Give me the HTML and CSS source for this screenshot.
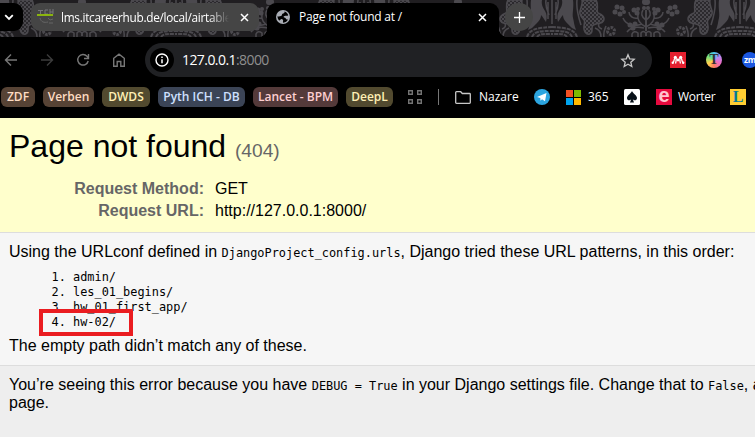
FILE: index.html
```
<!DOCTYPE html>
<html lang="en">
<head>
<meta charset="utf-8">
<title>Page not found at /</title>
<link rel="stylesheet" href="styles.css">
</head>
<body>
<div class="browser">
  <div class="tabstrip">
    <svg class="damask" width="755" height="37" aria-hidden="true">
      <defs>
        <pattern id="mesh" width="4" height="4" patternUnits="userSpaceOnUse">
          <rect width="4" height="4" fill="#4b494e"/>
          <circle cx="1" cy="1" r="1" fill="#201e21"/><circle cx="3" cy="3" r="1" fill="#201e21"/>
        </pattern>
        <g id="half" fill="none" stroke="#4b494e" stroke-width="1.5">
          <path d="M0 31V10M0 27C6 24 9 19 8 14M0 20C5 17 5 13 3 10M8 18c5 1 9-2 9-6M4 24c8 3 16 1 19-6M2 28c9-2 14 0 17 4"/>
          <g fill="#4b494e" stroke="none">
            <circle cx="1" cy="2" r="3"/><circle cx="2" cy="8" r="2"/>
            <circle cx="9" cy="13" r="2.500"/><circle cx="12" cy="10" r="2.500"/><circle cx="8" cy="9" r="2"/>
            <circle cx="24" cy="8" r="2.500"/><circle cx="29" cy="7" r="2.500"/><circle cx="31" cy="12" r="2.500"/><circle cx="26" cy="14" r="2.500"/><circle cx="22" cy="12" r="2"/>
            <circle cx="11" cy="24" r="2.500"/><circle cx="16" cy="25" r="2.500"/><circle cx="13" cy="28" r="2.500"/>
          </g>
          <path d="M0 36v-3q3-3 5 0v4M8 37v-4q4-3 6 1v3"/>
          <circle cx="35" cy="31" r="3.500" stroke-width="3" stroke-dasharray="2.500 1"/>
          <path d="M42 37c1-5-1-8-2-11M45 37c0-6 3-8 6-9M44 29c3-1 4-3 3-5"/>
          <path d="M50 0h14c-1 4 1 7 2 11s-2 7-4 9 2 8-1 12-7 2-7-2 0-5-4-6-8-1-8-5 4-5 6-6-1-9 2-13Z" fill="url(#mesh)"/>
          <path d="M73 0h11c-1 4 1 8 3 11s2 7 1 11c-2-3-3-5-5-7 0 5-4 8-9 13l-4 2c2-5 2-8 3-12s-1-11 0-18Z" fill="#4b494e" stroke="none"/>
          <path d="M69 0c1 9-1 16-4 25M88 0c-1 6 1 10 3 15M94 0v24M90 2v17"/>
          <path d="M69 37c3-9 12-9 25-10M74 37c2-6 9-6 20-6M79 37c3-4 8-3 15-3" stroke-width="2" stroke-dasharray="4 1"/>
        </g>
        <pattern id="lace" x="552" y="0" width="188" height="37" patternUnits="userSpaceOnUse">
          <rect width="188" height="37" fill="#201e21"/>
          <use href="#half" x="94"/>
          <use href="#half" transform="translate(94 0) scale(-1 1)"/>
        </pattern>
      </defs>
      <rect width="755" height="37" fill="url(#lace)"/>
    </svg>
    <div class="tab-search"><svg width="10" height="7" viewBox="0 0 10 7"><path d="M1.2 1.2 5 5l3.8-3.8" fill="none" stroke="#fff" stroke-width="1.8"/></svg></div>
    <div class="tab tab-idle">
      <svg class="favicon" width="17" height="17" viewBox="0 0 17 17"><g fill="none" stroke="#77777a"><path d="M1 1.500h5M3.500 1.500V5M11 1H8v4h3M13 0v5M16 0v5M13 3h3"/><path d="M3 9c1 4 4 5 8 4M11 9l2 2 3-1M12 14h4" stroke="#666"/></g><path d="M0 6h16" stroke="#9bd000" stroke-width="1.600"/></svg>
      <span class="tab-title t1">lms.itcareerhub.de/local/airtable</span>
      <svg class="close" width="9" height="9" viewBox="0 0 9 9"><path d="m1 1 7 7M8 1 1 8" stroke="#fff" stroke-width="1.500"/></svg>
    </div>
    <div class="tab tab-active">
      <svg class="favicon" width="14" height="14" viewBox="0 0 14 14"><circle cx="7" cy="7" r="7" fill="#a9adb5"/><path d="M8.500 1.500C9 3 7.500 3.200 6.500 3.800S6.500 5.500 5 6 3 6.600 1.500 6.300C1.400 8 2.300 9.600 3.200 10.600 4.500 10.500 4.200 9 5.500 9s1.800 1 1.600 2-.3 1.500.4 1.700c2-.2 3.600-1.500 4.500-3.200-1.200.3-1.800-.2-2.200-1S8.500 8 7.800 7.300s.7-1.800 1.900-1.600 2 .3 2.500-.8C11.500 3 10.200 2 8.500 1.500Z" fill="#000"/></svg>
      <span class="tab-title t2">Page not found at /</span>
      <svg class="close" width="9" height="9" viewBox="0 0 9 9"><path d="m1 1 7 7M8 1 1 8" stroke="#fff" stroke-width="1.500"/></svg>
    </div>
    <div class="new-tab"><svg width="11" height="11" viewBox="0 0 11 11"><path d="M5.500 0v11M0 5.500h11" stroke="#fff" stroke-width="1.300"/></svg></div>
  </div>

  <div class="toolbar">
    <svg class="nav" width="14" height="14" viewBox="0 0 14 14"><path d="M13 7H2M7 1.500 1.500 7 7 12.500" fill="none" stroke="#777" stroke-width="1.400"/></svg>
    <svg class="nav" width="14" height="14" viewBox="0 0 14 14"><path d="M1 7h11M7 1.500 12.500 7 7 12.500" fill="none" stroke="#3c3c3c" stroke-width="1.400"/></svg>
    <svg class="nav" width="14" height="14" viewBox="0 0 14 14"><path d="M12.200 8A5.300 5.300 0 1 1 11 3.200L12.500 5M12.500 1v4.500H8" fill="none" stroke="#777" stroke-width="1.400"/></svg>
    <svg class="nav" width="14" height="14" viewBox="0 0 14 14"><path d="M1.700 13.200V5.300L7 1.200l5.300 4.100v7.900H8.800V8.500H5.200v4.700Z" fill="none" stroke="#777" stroke-width="1.400"/></svg>
    <div class="omnibox">
      <div class="info"><svg width="14" height="14" viewBox="0 0 14 14"><circle cx="7" cy="7" r="6" fill="none" stroke="#fff" stroke-width="1.400"/><path d="M7 6.200v4M7 3.400v1.500" stroke="#fff" stroke-width="1.500"/></svg></div>
      <span class="url">127.0.0.1<span>:8000</span></span>
      <svg class="star" width="16" height="15" viewBox="0 0 16 15"><path d="m8 1.700 1.700 4.100 4.500.4-3.400 3 1 4.300L8 11.200l-3.800 2.300 1-4.300-3.400-3 4.500-.4Z" fill="none" stroke="#c7c7c7" stroke-width="1.300"/></svg>
    </div>
    <svg class="ext" width="16" height="16" viewBox="0 0 16 16"><path fill="#e5202f" d="M0 0h16v16H0z"/><g fill="#fff"><circle cx="5.300" cy="5.200" r="1.500"/><circle cx="10.700" cy="5.200" r="1.500"/><circle cx="8" cy="8" r="1.400"/><circle cx="2.800" cy="10.800" r="1.200"/><circle cx="13.200" cy="10.800" r="1.200"/></g><path d="M3 10.500C4.500 9.500 3.800 6 5.300 5.500S6 10 5.500 11.500M13 10.500C11.500 9.500 12.200 6 10.700 5.500S10 10 10.500 11.500" fill="none" stroke="#fff" stroke-width="1.300"/></svg>
    <div class="ext rainbow">T</div>
    <div class="ext zoom-app">zm</div>
  </div>

  <div class="bookmarks">
    <span class="chip brown c1">ZDF</span>
    <span class="chip brown c2">Verben</span>
    <span class="chip olive c3">DWDS</span>
    <span class="chip blue c4">Pyth ICH - DB</span>
    <span class="chip rose c5">Lancet - BPM</span>
    <span class="chip olive c6">DeepL</span>
    <svg class="apps" width="14" height="14" viewBox="0 0 14 14"><path d="M.7.700h3.600v3.600H.7zM9.700.700h3.600v3.600H9.700zM.7 9.700h3.600v3.600H.7zM9.700 9.700h3.600v3.600H9.700z" fill="none" stroke="#747474" stroke-width="1.400"/></svg>
    <i class="divider"></i>
    <svg class="folder" width="16" height="13" viewBox="0 0 16 13"><path d="M.7 1.500q0-.8.800-.8h4.200l1.600 1.800h7.200q.8 0 .8.800v8.200q0 .8-.8.800h-13q-.8 0-.8-.8Z" fill="none" stroke="#c7c7c7" stroke-width="1.300"/></svg>
    <span class="mark m1">Nazare</span>
    <svg class="telegram" width="16" height="16" viewBox="0 0 16 16"><circle cx="8" cy="8" r="8" fill="#2ca5e0"/><path d="m3 8 9.500-4L11 12.300 8 10.200l-1.500 1.600-.2-2.800Z" fill="#fff"/></svg>
    <svg class="windows" width="15" height="15" viewBox="0 0 15 15"><path fill="#f25022" d="M0 0h7v7H0z"/><path fill="#7fba00" d="M8 0h7v7H8z"/><path fill="#00a4ef" d="M0 8h7v7H0z"/><path fill="#ffb900" d="M8 8h7v7H8z"/></svg>
    <span class="mark m2">365</span>
    <svg class="spade" width="16" height="16" viewBox="0 0 16 16"><rect width="16" height="16" rx="1.500" fill="#fff"/><path d="M8 2c1 2.500 5 4.500 5 7 0 2.500-3 3-4.200 1.300L10 13.500H6l1.200-3.200C6 12 3 11.500 3 9c0-2.500 4-4.500 5-7Z" fill="#071018"/></svg>
    <span class="e-icon">e</span>
    <span class="mark m3">Worter</span>
    <span class="l-icon">L</span>
  </div>
</div>

<main>
  <header class="summary">
    <h1>Page not found <span>(404)</span></h1>
    <table class="meta">
      <tr><th>Request Method:</th><td>GET</td></tr>
      <tr><th>Request URL:</th><td>http://127.0.0.1:8000/</td></tr>
    </table>
  </header>
  <section class="info-block">
    <p>Using the URLconf defined in <code>DjangoProject_config.urls</code>, Django tried these URL patterns, in this order:</p>
    <ol>
      <li>admin/</li>
      <li>les_01_begins/</li>
      <li>hw_01_first_app/</li>
      <li class="marked">hw-02/</li>
    </ol>
    <p>The empty path didn’t match any of these.</p>
  </section>
  <footer class="explanation">
    <p>You’re seeing this error because you have <code>DEBUG = True</code> in your Django settings file. Change that to <code>False</code>, a<br>page.</p>
  </footer>
</main>
</body>
</html>
```
FILE: styles.css
```
*, *::before, *::after { box-sizing: border-box; }
body {
  margin: 0;
  width: 755px;
  height: 437px;
  overflow: hidden;
  background: #eee;
  color: #000;
  font: 16px/18px "Liberation Sans", Arial, sans-serif;
}
svg { display: block; flex: none; }

.browser {
  height: 118px;
  background: #000;
  color: #fff;
  font-family: "Open Sans", "Noto Sans", sans-serif;
  font-size: 12px;
}
.tabstrip {
  position: relative;
  display: flex;
  height: 37px;
  padding-top: 3px;
}
.damask { position: absolute; left: 0; top: 0; }
.tab-search, .tab, .new-tab { position: relative; display: flex; align-items: center; }
.tab-search {
  width: 23px;
  height: 28px;
  padding-left: 4px;
  background: #000;
  border-radius: 0 9px 9px 0;
}
.tab { height: 28px; white-space: nowrap; }
.tab-idle {
  width: 228px;
  margin: 0 8px;
  padding: 0 10px 0 6px;
  border-radius: 9px;
  background: #454545;
}
.tab-active {
  width: 232px;
  height: 34px;
  padding: 0 12px 6px 9px;
  border-radius: 9px 9px 0 0;
  background: #000;
}
.tab-active::before, .tab-active::after {
  content: "";
  position: absolute;
  bottom: 0;
  width: 9px;
  height: 9px;
}
.tab-active::before { left: -9px; background: radial-gradient(circle at 0 0, transparent 9px, #000 9.5px); }
.tab-active::after { right: -9px; background: radial-gradient(circle at 100% 0, transparent 9px, #000 9.5px); }
.t1 {
  width: 168px;
  margin-left: 7px;
  font-size: 11.8px;
  letter-spacing: -0.28px;
  -webkit-mask-image: linear-gradient(90deg, #000 148px, transparent 168px);
  mask-image: linear-gradient(90deg, #000 148px, transparent 168px);
}
.t2 { margin-left: 9px; letter-spacing: -0.22px; }
.close { margin-left: auto; }
.new-tab {
  width: 28px;
  height: 28px;
  margin-left: 6px;
  justify-content: center;
  border-radius: 50%;
  background: #454545;
}

.toolbar {
  display: flex;
  align-items: center;
  height: 46px;
  padding-left: 4px;
}
.nav { margin-right: 22px; }
.omnibox {
  display: flex;
  flex: none;
  align-items: center;
  width: 507px;
  height: 34px;
  margin-left: -3px;
  padding: 0 16px 0 5px;
  border-radius: 17px;
  background: #202124;
}
.info {
  display: grid;
  place-items: center;
  width: 24px;
  height: 24px;
  border-radius: 50%;
  background: #000;
}
.url { margin-left: 8px; font-size: 14px; letter-spacing: -0.57px; }
.url span { color: #8f8f8f; }
.star { margin-left: auto; }
.ext { flex: none; width: 16px; height: 16px; margin-left: 18px; }
.rainbow {
  margin-left: 20px;
  border-radius: 50%;
  background: conic-gradient(#45c8ef, #b888f0, #f06ac0, #ff7c60, #ffd34d, #72e07b, #45c8ef);
  color: #333;
  font: bold 14px/16px "Liberation Serif", serif;
  text-align: center;
}
.zoom-app {
  margin-left: 20px;
  border-radius: 50%;
  background: #1b57e0;
  font: bold 8.5px/15px "Open Sans", sans-serif;
  padding-left: 2px;
  letter-spacing: -0.3px;
  white-space: nowrap;
}

.bookmarks {
  display: flex;
  align-items: center;
  height: 28px;
  padding-left: 1px;
  white-space: nowrap;
}
.chip {
  flex: none;
  height: 20px;
  margin-right: 8px;
  border-radius: 6px;
  font-weight: 600;
  line-height: 20px;
  text-align: center;
}
.brown { background: #574335; color: #ffdcc3; }
.olive { background: #524a2f; color: #fff0b5; }
.blue { background: #3b4456; color: #cfe0ff; }
.rose { background: #543a3a; color: #ffd0d2; }
.c1 { width: 34px; }
.c2 { width: 51px; }
.c3 { width: 48px; }
.c4 { width: 87px; }
.c5 { width: 85px; }
.c6 { width: 47px; }
.apps { margin-left: 7px; }
.divider { flex: none; width: 1px; height: 16px; margin: 0 16px 0 16px; background: #777; }
.m1 { width: 38px; margin: 0 17px 0 8px; }
.windows { margin-left: 16px; }
.m2 { width: 20px; margin: 0 16px 0 7px; }
.e-icon {
  flex: none;
  width: 16px;
  height: 16px;
  margin-left: 16px;
  background: #e60a3e;
  color: #ffc4d0;
  font: bold 20px/13px "Liberation Sans", sans-serif;
  text-align: center;
}
.m3 { width: 37px; margin: 0 15px 0 6px; letter-spacing: -0.3px; }
.l-icon {
  flex: none;
  width: 16px;
  height: 16px;
  background: #ffcd32;
  color: #087c96;
  font: bold 16px/16px "Liberation Serif", serif;
  text-align: center;
}

h1, p, ol { margin: 0; font-weight: normal; }
p { white-space: nowrap; }
.summary {
  height: 115px;
  padding: 10px 9px;
  border-bottom: 1px solid #ddd;
  background: #ffc;
}
h1 { font-size: 32px; line-height: 36px; margin-bottom: 9px; }
h1 span { color: #666; font-size: 19.2px; }
.meta { border-collapse: collapse; }
.meta th, .meta td { padding: 2px 0; line-height: 18px; }
.meta th { width: 195px; color: #666; text-align: right; }
.meta td { padding-left: 11px; }
.info-block {
  height: 133px;
  padding: 10px 9px;
  border-bottom: 1px solid #ddd;
  background: #f6f6f6;
}
code, ol { font-family: "DejaVu Sans Mono", monospace; font-size: 11.9px; }
code { line-height: 1; }
ol { margin: 9px 0 7px; padding-left: 64px; line-height: 15px; }
.marked { position: relative; }
.marked::after {
  content: "";
  position: absolute;
  left: -34px;
  top: -6px;
  width: 94px;
  height: 27px;
  border: 4px solid #ea1c20;
}
.explanation { padding: 10px 9px; background: #eee; }
```
